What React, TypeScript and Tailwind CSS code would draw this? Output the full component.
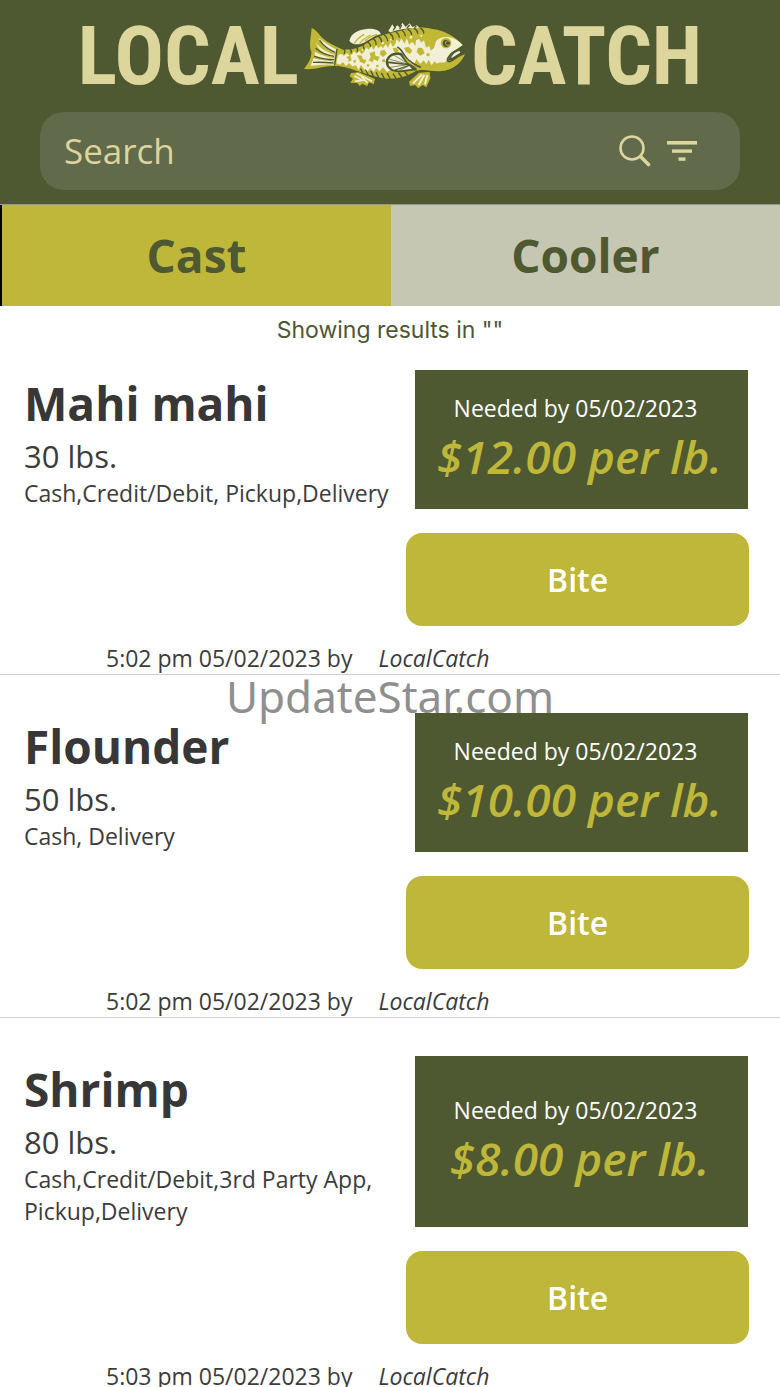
type Listing = {
  name: string;
  weight: string;
  terms: string;
  neededBy: string;
  price: string;
  posted: string;
  author: string;
};

const listings: Listing[] = [
  {
    name: "Mahi mahi",
    weight: "30 lbs.",
    terms: "Cash,Credit/Debit, Pickup,Delivery",
    neededBy: "05/02/2023",
    price: "$12.00 per lb.",
    posted: "5:02 pm 05/02/2023 by",
    author: "LocalCatch",
  },
  {
    name: "Flounder",
    weight: "50 lbs.",
    terms: "Cash, Delivery",
    neededBy: "05/02/2023",
    price: "$10.00 per lb.",
    posted: "5:02 pm 05/02/2023 by",
    author: "LocalCatch",
  },
  {
    name: "Shrimp",
    weight: "80 lbs.",
    terms: "Cash,Credit/Debit,3rd Party App, Pickup,Delivery",
    neededBy: "05/02/2023",
    price: "$8.00 per lb.",
    posted: "5:03 pm 05/02/2023 by",
    author: "LocalCatch",
  },
];

function FishLogo() {
  return (
    <svg viewBox="28 30 492 210" className="h-[70px] w-[164px] shrink-0" aria-hidden="true">
      {/* tail */}
      <path
        d="M54 51C64 55 72 64 80 74C96 92 116 101 144 114L130 166C98 161 70 177 31 174C43 158 54 142 53 122C45 104 52 78 54 51Z"
        fill="#c1b936"
      />
      <g fill="#f1f0d6">
        <path d="M74 80C90 92 112 108 128 115L124 127C104 119 86 101 74 80Z" />
        <path d="M66 95C80 112 102 125 123 131L122 139C98 135 76 121 66 95Z" />
        <path d="M64 122C80 132 100 138 122 142V149C100 147 78 142 63 132Z" />
        <path d="M60 142C80 147 102 150 122 152L120 162C98 158 74 163 51 164Z" />
      </g>
      <path
        d="M78 88C92 108 108 117 124 124M66 112C82 126 102 133 121 136M62 136C82 142 100 146 121 146M58 154C82 153 98 154 120 156"
        fill="none"
        stroke="#4e5831"
        strokeWidth="4"
      />
      <path d="M130 114L123 163" stroke="#4e5831" strokeWidth="4" />
      {/* dorsal fins */}
      <path
        d="M167 90C172 66 196 56 218 54C238 52 258 56 262 70C240 74 232 84 216 92C200 102 178 104 167 90Z"
        fill="#f1f0d6"
      />
      <path
        d="M182 97C190 84 200 76 212 70M198 98C206 86 218 78 230 72M214 90C222 80 234 74 250 70"
        fill="none"
        stroke="#c1b936"
        strokeWidth="4"
      />
      <path
        d="M284 60L296 40L302 50L312 43L318 50L326 35L336 48L348 37L356 48L370 43L378 52C350 49 318 55 290 64Z"
        fill="#f1f0d6"
      />
      <path
        d="M298 58L306 48M318 54L324 42M340 51L348 42M362 50L368 45"
        stroke="#4e5831"
        strokeWidth="4"
      />
      {/* lower fins */}
      <path
        d="M172 186L196 184L244 204L240 220L226 214L220 226L207 218L198 225L190 215L170 216L178 203L168 196Z"
        fill="#c1b936"
      />
      <path
        d="M182 194L206 208L184 211M204 198L222 216M188 187L235 211"
        fill="none"
        stroke="#f1f0d6"
        strokeWidth="5"
      />
      <path
        d="M376 185L408 183L410 202L398 229L387 222L374 232L364 222L349 225L346 212Z"
        fill="#c1b936"
      />
      <path
        d="M385 190L358 217M392 192L375 222M401 192L394 220"
        stroke="#f1f0d6"
        strokeWidth="6"
      />
      {/* body */}
      <path
        d="M134 113C164 120 194 114 220 96C250 75 282 67 318 60C352 49 382 46 416 54C456 59 486 79 507 102C496 112 476 121 462 148C478 152 493 136 515 127C506 153 478 180 438 181C411 182 389 172 365 181C338 198 304 207 268 202C240 196 218 188 190 180C166 171 148 168 126 163Z"
        fill="#c1b936"
      />
      {/* mottled flank and head */}
      <path
        d="M133 133L143 128L151 135L159 126L168 135L177 128L181 120L188 128L196 119L204 130L212 122L217 109L225 116L233 105L239 116L248 103L254 112L262 104L268 112L276 99L283 110L290 94L298 108L305 98L309 84L317 94L323 82L332 98L340 82L346 101L356 92L365 105L367 88L376 84L383 95L391 88L397 110L407 105L411 119L421 111L427 91C437 76 462 75 478 82C492 88 501 96 507 102C493 112 473 119 462 146C452 163 438 148 430 158L422 151L414 163L405 146L398 160L390 148L380 159L368 144L360 164L350 155L340 178L326 181L310 184L294 175L280 183L268 169L258 181L247 171L240 183L230 172L220 184L209 172L202 161L195 177L187 163L176 166L166 156L157 166L148 153L139 161L128 157Z"
        fill="#f1f0d6"
      />
      <g fill="#c1b936">
        <path d="M157 138L170 134L174 148L162 153L165 145ZM190 132L205 134L207 144L218 147L213 158L200 153L196 145ZM228 126L244 121L245 134L258 137L252 151L241 145L236 154L225 148L231 139ZM261 119L272 116L280 128L268 138L258 130ZM297 111L309 110L316 119L306 126L300 120ZM331 111L345 107L356 119L349 129L337 123ZM373 110L386 111L393 127L380 134L369 124Z" />
        <circle cx="183" cy="151" r="4" />
        <circle cx="223" cy="163" r="4" />
        <circle cx="270" cy="149" r="5" />
        <circle cx="251" cy="165" r="4" />
        <circle cx="403" cy="131" r="5" />
      </g>
      <g fill="#f1f0d6">
        <circle cx="207" cy="116" r="3" />
        <circle cx="267" cy="96" r="4" />
        <circle cx="352" cy="79" r="4" />
        <circle cx="383" cy="74" r="3" />
        <circle cx="291" cy="86" r="3" />
      </g>
      {/* back stripes and belly ribs */}
      <path
        d="M151 114Q156 120 152 127M169 113Q175 119 172 126M188 108Q194 114 191 122M205 101Q212 106 211 114M222 92Q230 98 231 106M239 83Q248 90 247 100M255 77Q264 83 264 93M272 72Q281 79 282 89M289 68Q299 75 298 85M307 62Q316 69 317 78M325 58Q334 65 335 74M343 55Q353 61 354 70M362 52Q372 58 372 67M381 52Q391 58 390 66"
        fill="none"
        stroke="#4e5831"
        strokeWidth="4"
        strokeLinecap="round"
      />
      <path
        d="M207 184L201 174M223 190L216 177M239 195L232 181M255 200L248 185M272 203L264 187M290 204L281 188M307 202L299 189M324 198L315 186M341 192L332 181"
        stroke="#4e5831"
        strokeWidth="4"
        strokeLinecap="round"
      />
      {/* gill and pectoral fin */}
      <path
        d="M311 108C330 118 332 142 350 151C360 160 370 164 382 169"
        fill="none"
        stroke="#4e5831"
        strokeWidth="5"
      />
      <path
        d="M324 126C302 119 278 132 276 153C276 175 301 187 325 183C340 183 354 177 369 179C374 171 356 165 345 154Z"
        fill="#4e5831"
      />
      <path
        d="M319 133C301 129 286 138 283 151L340 158ZM284 157C285 167 293 173 301 176L343 163ZM309 178C324 179 339 174 355 174L347 165Z"
        fill="#f1f0d6"
      />
      <path
        d="M302 133L341 157M286 144L340 159M290 169L341 161M317 179L344 165"
        stroke="#4e5831"
        strokeWidth="2"
      />
      <path d="M327 132L360 164L342 155Z" fill="#c1b936" />
      {/* eye */}
      <circle cx="457" cy="96" r="16" fill="#c1b936" />
      <circle cx="458" cy="97" r="11" fill="#4e5831" />
      <path d="M467 91A7 7 0 1 0 467 102" fill="none" stroke="#c1b936" strokeWidth="3" />
      {/* mouth */}
      <path
        d="M504 111C490 118 476 121 469 132C458 145 459 154 470 151C484 146 490 132 513 127"
        fill="none"
        stroke="#4e5831"
        strokeWidth="5"
        strokeLinecap="round"
      />
      <path d="M497 119C484 124 477 129 472 141C482 138 488 130 500 125Z" fill="#f1f0d6" />
    </svg>
  );
}

function SearchIcon() {
  return (
    <svg viewBox="0 0 32 32" className="size-8" fill="none" stroke="#dcd59c" aria-hidden="true">
      <circle cx="13" cy="13" r="11.5" strokeWidth="2.6" />
      <path d="M21.5 21.5L29.5 29.5" strokeWidth="3.6" strokeLinecap="round" />
    </svg>
  );
}

function FilterIcon() {
  return (
    <svg viewBox="0 0 30 22" className="h-[22px] w-[30px]" fill="#dcd59c" aria-hidden="true">
      <rect x="0" y="1" width="30" height="3.6" />
      <rect x="5" y="9.4" width="20" height="3.4" />
      <rect x="11.5" y="17.4" width="7" height="3.4" />
    </svg>
  );
}

function ListingCard({ item }: { item: Listing }) {
  return (
    <li className="border-b border-[#d0d0d0] pt-[38px] first:pt-4">
      <div className="flex justify-between pr-8 pl-6">
        <div className="min-w-0 flex-1">
          <h2 className="text-[46px] leading-[66px] font-bold text-[#373737]">{item.name}</h2>
          <p className="text-[31px] leading-[41px]">{item.weight}</p>
          <p className="text-[23px] leading-8">{item.terms}</p>
        </div>
        <div className="ml-1 flex w-[46%] shrink-0 flex-col items-center justify-center bg-[#4e5831] pr-1">
          <p className="pr-2 text-[23px] leading-8 text-white">Needed by {item.neededBy}</p>
          <p className="text-[46px] leading-[64px] font-semibold text-[#beb739] italic">{item.price}</p>
        </div>
      </div>
      <div className="mt-6 flex justify-end pr-[31px] pl-1">
        <button
          type="button"
          className="h-[93px] w-[46%] rounded-2xl bg-[#beb739] text-[32px] font-semibold text-white"
        >
          Bite
        </button>
      </div>
      <p className="mt-4 flex gap-[26px] pl-[106px] text-[23px] leading-8">
        <span>{item.posted}</span>
        <em>{item.author}</em>
      </p>
    </li>
  );
}

export default function App() {
  return (
    <div className="relative flex h-dvh flex-col bg-white font-['Open_Sans','Noto_Sans',sans-serif] text-[#3c3c3c]">
      <header className="bg-[#4e5831] px-10 pb-[14px]">
        <h1 className="flex h-28 items-center justify-center gap-1 font-['Roboto_Condensed','Roboto',sans-serif] text-[82px] leading-none font-bold text-[#dcd59c]">
          <span>LOCAL</span>
          <FishLogo />
          <span>CATCH</span>
        </h1>
        <div className="flex h-[78px] items-center rounded-3xl bg-[#616a4b] pr-[43px] pl-6">
          <input
            type="search"
            aria-label="Search"
            placeholder="Search"
            className="min-w-0 flex-1 bg-transparent text-[35px] text-[#dcd59c] outline-none placeholder:text-[#dcd59c]"
          />
          <button type="button" aria-label="Run search">
            <SearchIcon />
          </button>
          <button type="button" aria-label="Filter results" className="ml-4">
            <FilterIcon />
          </button>
        </div>
      </header>

      <nav className="flex h-[102px] shrink-0 border-t border-[#969b80] text-[46px] font-bold text-[#4e5831]">
        <button type="button" aria-pressed="true" className="flex-1 border-l-2 border-black bg-[#beb739]">
          Cast
        </button>
        <button type="button" aria-pressed="false" className="flex-1 bg-[#c6c7b3]">
          Cooler
        </button>
      </nav>

      <main className="min-h-0 flex-1 overflow-y-auto [scrollbar-width:none]">
        <p className="h-12 text-center font-['Inter',sans-serif] text-[23px] leading-[48px] text-[#4e5831]">
          Showing results in ""
        </p>
        <ul>
          {listings.map((item) => (
            <ListingCard key={item.name} item={item} />
          ))}
        </ul>
      </main>

      <div className="pointer-events-none absolute inset-0 flex items-center justify-center pt-1 font-['Noto_Sans',sans-serif] text-[44px] leading-none text-[#8f8f8f]">
        UpdateStar.com
      </div>
    </div>
  );
}
